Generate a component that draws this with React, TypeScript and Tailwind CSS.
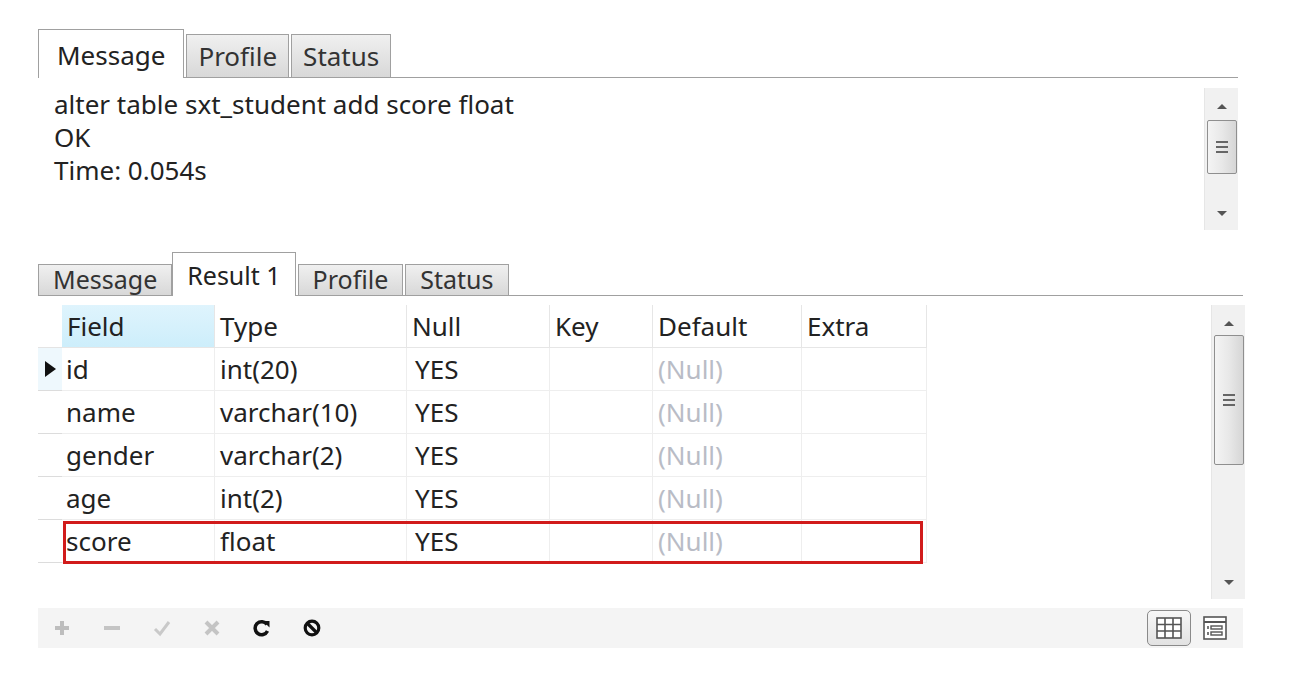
import React from "react"

const font = { fontFamily: '"Noto Sans", "Open Sans", sans-serif' }

function Tab({ label, active, small, first }: { label: string; active?: boolean; small?: boolean; first?: boolean }) {
  if (active) {
    return (
      <div
        className={`relative -mb-px flex items-start border border-b-0 border-[#a0a0a0] bg-white text-[#222] ${small ? "h-[44px] px-[14px] pt-[4px] text-[25px]" : "h-[49px] px-[18px] pt-[6px] text-[26px]"}`}
      >
        {label}
        <div className="absolute -bottom-px left-0 right-0 h-px bg-white" />
      </div>
    )
  }
  return (
    <div
      className={`${first ? "" : "ml-[2px]"} flex items-end border border-b-0 border-[#a0a0a0] bg-gradient-to-b from-[#f0f0f0] to-[#d8d8d8] leading-none text-[#333] ${small ? "h-[31px] px-[14px] pb-[3px] text-[25px]" : "h-[43px] px-[11px] pb-[8px] text-[26px]"}`}
    >
      {label}
    </div>
  )
}

function ScrollBar({ thumbTop, thumbHeight }: { thumbTop: number; thumbHeight: number }) {
  return (
    <div className="flex h-full w-[34px] flex-col items-center bg-[#f1f1f1] border-l border-[#e6e6e6]">
      <svg width="14" height="10" viewBox="0 0 14 10" className="mt-[14px]">
        <path d="M2 7 L7 2 L12 7 Z" fill="#555" />
      </svg>
      <div
        className="flex w-[30px] flex-col items-center justify-center gap-[3px] rounded-[2px] border border-[#8f8f8f] bg-gradient-to-r from-[#f4f4f4] via-[#e8e8e8] to-[#d6d6d6]"
        style={{ marginTop: thumbTop, height: thumbHeight }}
      >
        <div className="h-[2px] w-[12px] bg-[#666]" />
        <div className="h-[2px] w-[12px] bg-[#666]" />
        <div className="h-[2px] w-[12px] bg-[#666]" />
      </div>
      <div className="flex-1" />
      <svg width="14" height="10" viewBox="0 0 14 10" className="mb-[12px]">
        <path d="M2 3 L7 8 L12 3 Z" fill="#555" />
      </svg>
    </div>
  )
}

const cols = [
  { key: "field", label: "Field", w: "w-[153px]" },
  { key: "type", label: "Type", w: "w-[192px]" },
  { key: "nul", label: "Null", w: "w-[143px]" },
  { key: "k", label: "Key", w: "w-[103px]" },
  { key: "def", label: "Default", w: "w-[149px]" },
  { key: "extra", label: "Extra", w: "w-[125px]" },
]

const rows = [
  { field: "id", type: "int(20)" },
  { field: "name", type: "varchar(10)" },
  { field: "gender", type: "varchar(2)" },
  { field: "age", type: "int(2)" },
  { field: "score", type: "float" },
]

export default function App() {
  return (
    <div className="min-h-screen bg-white pl-[38px] pt-[29px] text-[#222]" style={font}>
      <div className="w-[1207px]">
        {/* top message panel */}
        <div className="flex w-[1200px] items-end border-b border-[#a0a0a0]">
          <Tab label="Message" active />
          <Tab label="Profile" />
          <Tab label="Status" />
        </div>
        <div className="flex h-[160px] pt-[10px]">
          <div className="flex-1 pl-[16px] text-[26px] leading-[33px]">
            <div>alter table sxt_student add score float</div>
            <div>OK</div>
            <div>Time: 0.054s</div>
          </div>
          <div className="mr-[7px] h-[142px]">
            <ScrollBar thumbTop={8} thumbHeight={54} />
          </div>
        </div>

        {/* result panel */}
        <div className="mt-[14px] flex w-[1205px] items-end border-b border-[#a0a0a0]">
          <Tab label="Message" small first />
          <Tab label="Result 1" active small />
          <Tab label="Profile" small />
          <Tab label="Status" small />
        </div>
        <div className="flex h-[312px] pt-[9px]">
          <div className="flex-1">
            <div className="flex h-[43px] text-[26px]">
              <div className="w-[24px] border-b border-[#e4e4e4]" />
              {cols.map((c) => (
                <div
                  key={c.key}
                  className={`${c.w} flex items-center border-r border-b border-[#e6e6e6] pl-[5px] ${c.key === "field" ? "bg-gradient-to-b from-[#dff4fd] to-[#cdeefb]" : ""}`}
                >
                  {c.label}
                </div>
              ))}
            </div>
            {rows.map((r, i) => (
              <div key={r.field} className="relative flex h-[43px] text-[26px]">
                <div
                  className={`flex w-[24px] items-center border-b border-[#dcdcdc] ${i === 0 ? "bg-[#eef8fd]" : ""}`}
                >
                  {i === 0 && (
                    <svg width="13" height="18" viewBox="0 0 13 18" className="ml-[6px]">
                      <path d="M1 1 L12 9 L1 17 Z" fill="#111" />
                    </svg>
                  )}
                </div>
                <div className="flex w-[153px] items-center border-r border-b border-[#eeeeee] pl-[4px]">{r.field}</div>
                <div className="flex w-[192px] items-center border-r border-b border-[#eeeeee] pl-[5px]">{r.type}</div>
                <div className="flex w-[143px] items-center border-r border-b border-[#eeeeee] pl-[8px]">YES</div>
                <div className="w-[103px] border-r border-b border-[#eeeeee]" />
                <div className="flex w-[149px] items-center border-r border-b border-[#eeeeee] pl-[5px] text-[#b9bcc6]">(Null)</div>
                <div className="w-[125px] border-r border-b border-[#eeeeee]" />
                {r.field === "score" && (
                  <div className="pointer-events-none absolute left-[25px] top-[1px] h-[43px] w-[860px] border-[3px] border-[#d11b1b]" />
                )}
              </div>
            ))}
          </div>
          <div className="-mt-[9px] h-[303px] pt-[9px]">
            <ScrollBar thumbTop={6} thumbHeight={130} />
          </div>
        </div>

        {/* toolbar */}
        <div className="flex h-[40px] w-[1205px] items-center bg-[#f4f4f4] pl-[14px] pr-[16px]">
          <div className="flex items-center gap-[30px]">
            <svg width="20" height="20" viewBox="0 0 20 20">
              <path d="M10 3 V17 M3 10 H17" stroke="#bdbdbd" strokeWidth="4" />
            </svg>
            <svg width="20" height="20" viewBox="0 0 20 20">
              <path d="M2 10 H18" stroke="#c4c4c4" strokeWidth="4" />
            </svg>
            <svg width="20" height="20" viewBox="0 0 20 20">
              <path d="M3 11 L8 16 L17 4" stroke="#c9c9c9" strokeWidth="3" fill="none" />
            </svg>
            <svg width="20" height="20" viewBox="0 0 20 20">
              <path d="M4 4 L16 16 M16 4 L4 16" stroke="#c4c4c4" strokeWidth="4" />
            </svg>
            <svg width="20" height="20" viewBox="0 0 20 20">
              <path d="M15 6.5 A6.5 6.5 0 1 0 15.5 13" stroke="#111" strokeWidth="3.5" fill="none" />
              <path d="M11 3 L17.5 3 L17.5 9.5 Z" fill="#111" />
            </svg>
            <svg width="20" height="20" viewBox="0 0 20 20">
              <circle cx="10" cy="10" r="6.8" stroke="#111" strokeWidth="3.2" fill="none" />
              <path d="M5.5 5.5 L14.5 14.5" stroke="#111" strokeWidth="3.2" />
            </svg>
          </div>
          <div className="flex-1" />
          <div className="flex items-center gap-[12px]">
            <div className="flex h-[36px] w-[44px] items-center justify-center rounded-[5px] border border-[#8a8a8a] bg-gradient-to-b from-[#f7f7f7] to-[#e2e2e2]">
              <svg width="26" height="22" viewBox="0 0 26 22">
                <rect x="1" y="1" width="24" height="20" fill="white" stroke="#555" strokeWidth="1.6" />
                <path d="M1 7.5 H25 M1 14 H25 M9 1 V21 M17 1 V21" stroke="#555" strokeWidth="1.6" />
              </svg>
            </div>
            <svg width="24" height="24" viewBox="0 0 24 24">
              <rect x="1" y="1" width="22" height="22" fill="white" stroke="#555" strokeWidth="1.6" />
              <path d="M1 6 H23" stroke="#555" strokeWidth="2" />
              <path d="M5 10 V13 M5 16 V19" stroke="#555" strokeWidth="1.6" />
              <rect x="8" y="10" width="11" height="3" fill="none" stroke="#555" strokeWidth="1.4" />
              <rect x="8" y="16" width="11" height="3" fill="none" stroke="#555" strokeWidth="1.4" />
            </svg>
          </div>
        </div>
      </div>
    </div>
  )
}
